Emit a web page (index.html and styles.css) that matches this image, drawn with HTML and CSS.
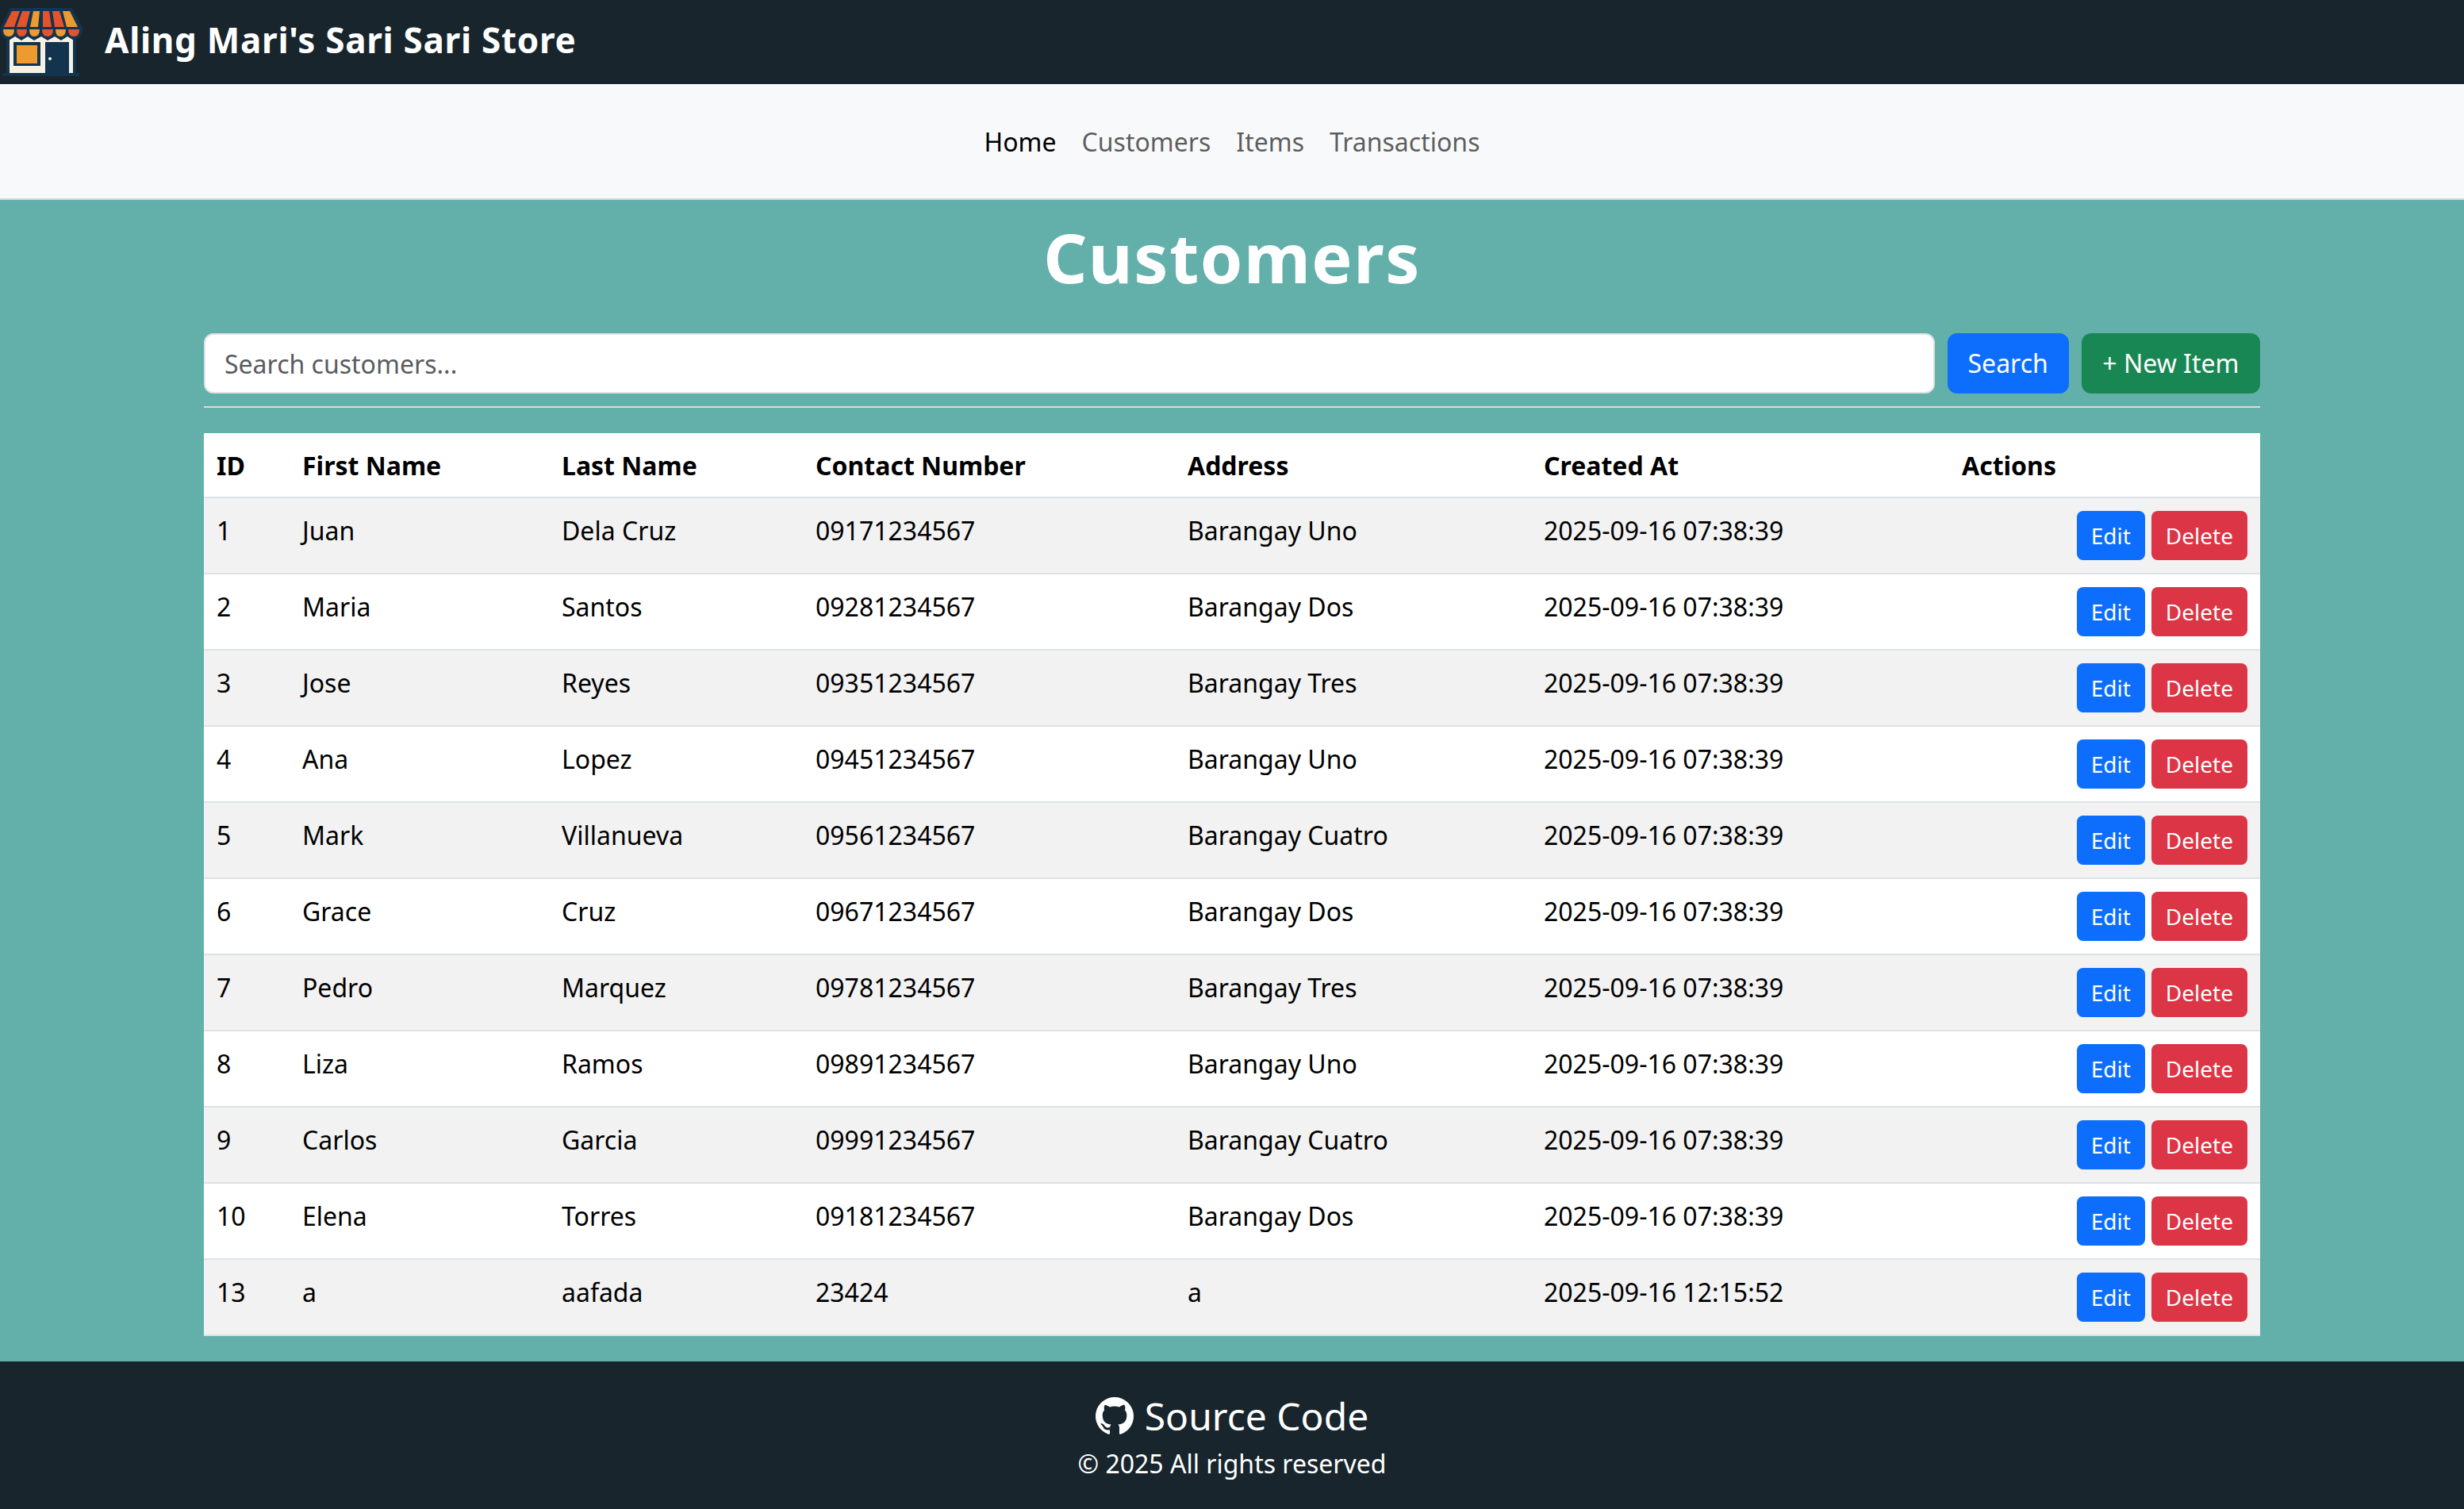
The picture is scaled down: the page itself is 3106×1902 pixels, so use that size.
FILE: index.html
```html
<!DOCTYPE html>
<html lang="en">
<head>
    <meta charset="UTF-8">
    <meta name="viewport" content="width=device-width, initial-scale=1.0">
    <title>Customers</title>
    <link rel="stylesheet" href="styles.css">
</head>
<body>

<header class="topbar">
    <svg class="logo" viewBox="0 0 106 106" aria-hidden="true">
        <path fill="#12344f" d="M13 10H91L104 35V40Q102 50 92 49H96V92H100V96H3V92H8V49H12Q2 50 1 40V35Z"/>
        <rect x="12" y="46" width="80" height="46" fill="#f8f1e3"/>
        <path fill="#e4532b" d="M15 14H25L18 34H5ZM28 14H38L33 34H21Z"/>
        <path fill="#ef9a2f" d="M42 14H50L48 34H38Z"/>
        <path fill="#e4532b" d="M54 14H62L65 34H54ZM66 14H75L81 34H69Z"/>
        <path fill="#ef9a2f" d="M79 14H88L98 34H84Z"/>
        <path fill="#12344f" d="M3 38H101V44L93 51L85 46L77 51L69 46L60 51L52 46L43 51L35 46L27 51L19 46L11 51L3 44Z"/>
        <path fill="#ef9a2f" d="M4 37H18Q18 46 11 46Q4 46 4 37ZM37 37H50Q50 46 43 46Q37 46 37 37ZM70 37H83Q83 46 76 46Q70 46 70 37Z"/>
        <path fill="#e4532b" d="M21 37H34Q34 46 27 46Q21 46 21 37ZM53 37H67Q67 46 60 46Q53 46 53 37ZM86 37H100Q100 46 93 46Q86 46 86 37Z"/>
        <rect x="17" y="53" width="34" height="30" fill="#12344f"/>
        <rect x="21" y="57" width="26" height="23" fill="#ef9a2f"/>
        <rect x="57" y="53" width="30" height="39" fill="#12344f"/>
        <circle cx="63" cy="74" r="2" fill="#f8f1e3"/>
    </svg>
    <span class="brand">Aling Mari's Sari Sari Store</span>
</header>

<nav class="mainnav">
    <a class="active" href="#">Home</a>
    <a href="#">Customers</a>
    <a href="#">Items</a>
    <a href="#">Transactions</a>
</nav>

<main class="content">
    <h1>Customers</h1>

    <form class="search-row">
        <input type="text" placeholder="Search customers...">
        <button type="button" class="btn btn-blue">Search</button>
        <button type="button" class="btn btn-green">+ New Item</button>
    </form>

    <hr>

    <table>
        <colgroup>
            <col class="col-id">
            <col class="col-first">
            <col class="col-last">
            <col class="col-contact">
            <col class="col-address">
            <col class="col-created">
            <col class="col-actions">
        </colgroup>
        <thead>
            <tr>
                <th>ID</th>
                <th>First Name</th>
                <th>Last Name</th>
                <th>Contact Number</th>
                <th>Address</th>
                <th>Created At</th>
                <th>Actions</th>
            </tr>
        </thead>
        <tbody>
            <tr><td>1</td><td>Juan</td><td>Dela Cruz</td><td>09171234567</td><td>Barangay Uno</td><td>2025-09-16 07:38:39</td><td><div class="actions"><a class="btn-sm btn-blue" href="#">Edit</a><a class="btn-sm btn-red" href="#">Delete</a></div></td></tr>
            <tr><td>2</td><td>Maria</td><td>Santos</td><td>09281234567</td><td>Barangay Dos</td><td>2025-09-16 07:38:39</td><td><div class="actions"><a class="btn-sm btn-blue" href="#">Edit</a><a class="btn-sm btn-red" href="#">Delete</a></div></td></tr>
            <tr><td>3</td><td>Jose</td><td>Reyes</td><td>09351234567</td><td>Barangay Tres</td><td>2025-09-16 07:38:39</td><td><div class="actions"><a class="btn-sm btn-blue" href="#">Edit</a><a class="btn-sm btn-red" href="#">Delete</a></div></td></tr>
            <tr><td>4</td><td>Ana</td><td>Lopez</td><td>09451234567</td><td>Barangay Uno</td><td>2025-09-16 07:38:39</td><td><div class="actions"><a class="btn-sm btn-blue" href="#">Edit</a><a class="btn-sm btn-red" href="#">Delete</a></div></td></tr>
            <tr><td>5</td><td>Mark</td><td>Villanueva</td><td>09561234567</td><td>Barangay Cuatro</td><td>2025-09-16 07:38:39</td><td><div class="actions"><a class="btn-sm btn-blue" href="#">Edit</a><a class="btn-sm btn-red" href="#">Delete</a></div></td></tr>
            <tr><td>6</td><td>Grace</td><td>Cruz</td><td>09671234567</td><td>Barangay Dos</td><td>2025-09-16 07:38:39</td><td><div class="actions"><a class="btn-sm btn-blue" href="#">Edit</a><a class="btn-sm btn-red" href="#">Delete</a></div></td></tr>
            <tr><td>7</td><td>Pedro</td><td>Marquez</td><td>09781234567</td><td>Barangay Tres</td><td>2025-09-16 07:38:39</td><td><div class="actions"><a class="btn-sm btn-blue" href="#">Edit</a><a class="btn-sm btn-red" href="#">Delete</a></div></td></tr>
            <tr><td>8</td><td>Liza</td><td>Ramos</td><td>09891234567</td><td>Barangay Uno</td><td>2025-09-16 07:38:39</td><td><div class="actions"><a class="btn-sm btn-blue" href="#">Edit</a><a class="btn-sm btn-red" href="#">Delete</a></div></td></tr>
            <tr><td>9</td><td>Carlos</td><td>Garcia</td><td>09991234567</td><td>Barangay Cuatro</td><td>2025-09-16 07:38:39</td><td><div class="actions"><a class="btn-sm btn-blue" href="#">Edit</a><a class="btn-sm btn-red" href="#">Delete</a></div></td></tr>
            <tr><td>10</td><td>Elena</td><td>Torres</td><td>09181234567</td><td>Barangay Dos</td><td>2025-09-16 07:38:39</td><td><div class="actions"><a class="btn-sm btn-blue" href="#">Edit</a><a class="btn-sm btn-red" href="#">Delete</a></div></td></tr>
            <tr><td>13</td><td>a</td><td>aafada</td><td>23424</td><td>a</td><td>2025-09-16 12:15:52</td><td><div class="actions"><a class="btn-sm btn-blue" href="#">Edit</a><a class="btn-sm btn-red" href="#">Delete</a></div></td></tr>
        </tbody>
    </table>
</main>

<footer class="site-footer">
    <a class="source-link" href="#">
        <svg class="gh-icon" viewBox="0 0 16 16" aria-hidden="true">
            <path fill="#fff" d="M8 0C3.58 0 0 3.58 0 8c0 3.54 2.29 6.53 5.47 7.59.4.07.55-.17.55-.38 0-.19-.01-.82-.01-1.49-2.01.37-2.53-.49-2.69-.94-.09-.23-.48-.94-.82-1.13-.28-.15-.68-.52-.01-.53.63-.01 1.08.58 1.23.82.72 1.21 1.87.87 2.33.66.07-.52.28-.87.51-1.07-1.78-.2-3.64-.89-3.64-3.95 0-.87.31-1.59.82-2.15-.08-.2-.36-1.02.08-2.12 0 0 .67-.21 2.2.82.64-.18 1.32-.27 2-.27.68 0 1.36.09 2 .27 1.53-1.04 2.2-.82 2.2-.82.44 1.1.16 1.92.08 2.12.51.56.82 1.27.82 2.15 0 3.07-1.87 3.75-3.65 3.95.29.25.54.73.54 1.48 0 1.07-.01 1.93-.01 2.2 0 .21.15.46.55.38A8.013 8.013 0 0016 8c0-4.42-3.58-8-8-8z"/>
        </svg>
        Source Code
    </a>
    <p>© 2025 All rights reserved</p>
</footer>

</body>
</html>
```

FILE: styles.css
```css
/* General Styling */
* {
    box-sizing: border-box;
    margin: 0;
    padding: 0;
}

body {
    font-family: "Noto Sans", Arial, sans-serif;
    font-size: 32px;
    line-height: 48px;
    background: #63b0ab;
    color: #000;
    min-height: 100vh;
    display: flex;
    flex-direction: column;
}

a {
    text-decoration: none;
}

.topbar {
    height: 106px;
    background: #18252c;
    display: flex;
    align-items: center;
    color: #fff;
}

.logo {
    width: 106px;
    height: 106px;
    flex: none;
}

.brand {
    margin-left: 26px;
    margin-bottom: 6px;
    font-weight: bold;
    font-size: 44px;
    letter-spacing: 0.7px;
}

.mainnav {
    height: 146px;
    padding-top: 2px;
    background: #f8f9fa;
    border-bottom: 2px solid #d3d8dc;
    display: flex;
    justify-content: center;
    align-items: center;
    gap: 32px;
}

.mainnav a {
    color: rgba(0, 0, 0, 0.65);
}

.mainnav a.active {
    color: #000;
}

.content {
    flex: 1;
    width: 2592px;
    margin: 0 auto;
}

h1 {
    color: #fff;
    font-weight: bold;
    font-size: 86px;
    line-height: 110px;
    letter-spacing: 1.5px;
    text-align: center;
    margin: 17px 0 41px;
}

.search-row {
    display: flex;
    gap: 16px;
}

.search-row input {
    flex: 1;
    height: 76px;
    padding: 0 24px;
    font: inherit;
    background: #fff;
    border: 2px solid #dee2e6;
    border-radius: 12px;
}

.search-row input::placeholder {
    color: #595c5f;
}

.btn {
    height: 76px;
    padding: 0 26px;
    font: inherit;
    color: #fff;
    border: 0;
    border-radius: 12px;
}

.btn-blue {
    background: #0d6efd;
}

.btn-green {
    background: #198754;
    padding: 0 26.5px;
}

.btn-red {
    background: #dc3545;
}

hr {
    border: 0;
    height: 2px;
    background: #d6dedc;
    margin: 16px 0 32px;
}

table {
    width: 100%;
    table-layout: fixed;
    border-collapse: collapse;
    background: #fff;
}

.col-id { width: 108px; }
.col-first { width: 327px; }
.col-last { width: 320px; }
.col-contact { width: 469px; }
.col-address { width: 449px; }
.col-created { width: 527px; }
.col-actions { width: 392px; }

th, td {
    padding: 16px 16px 14px;
    line-height: 50px;
    text-align: left;
    vertical-align: top;
    border-bottom: 2px solid #dee2e6;
}

th {
    font-weight: bold;
}

tbody tr:nth-child(odd) {
    background: #f2f2f2;
}

.actions {
    display: flex;
    justify-content: flex-end;
    gap: 8px;
    margin-bottom: 2px;
}

.btn-sm {
    display: block;
    height: 62px;
    padding: 0 18px;
    font-size: 28px;
    line-height: 62px;
    color: #fff;
    border-radius: 8px;
}

.site-footer {
    margin-top: 32px;
    height: 187px;
    background: #18252c;
    color: #fff;
    text-align: center;
    padding-top: 33px;
}

.source-link {
    display: flex;
    justify-content: center;
    align-items: center;
    gap: 14px;
    font-size: 48px;
    line-height: 72px;
    color: #fff;
}

.gh-icon {
    width: 48px;
    height: 48px;
}

.site-footer p {
    line-height: 48px;
}
```
